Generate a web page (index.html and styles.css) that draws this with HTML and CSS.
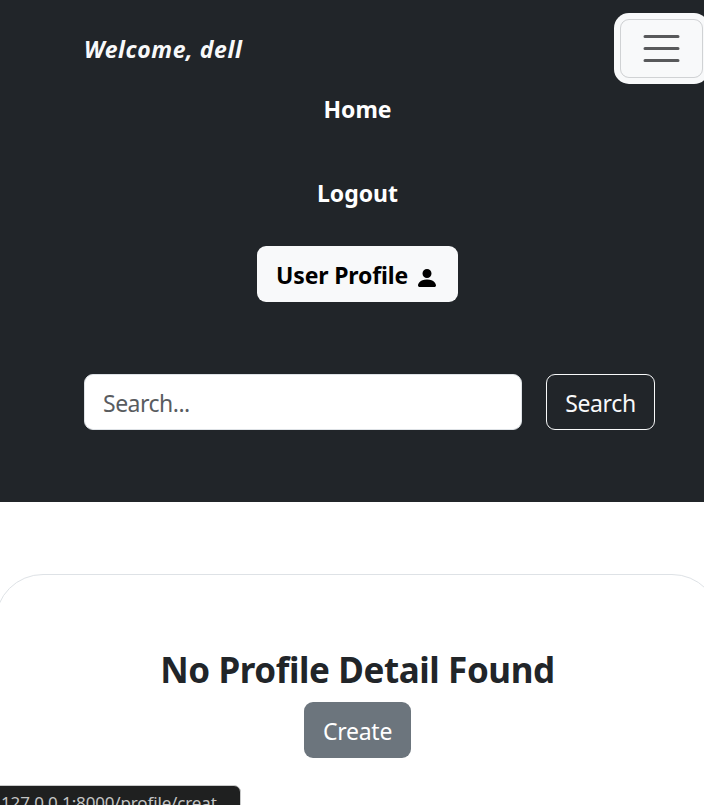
FILE: index.html
```
<!DOCTYPE html>
<html lang="en">
<head>
<meta charset="utf-8">
<title>Profile</title>
<link rel="stylesheet" href="styles.css">
</head>
<body>
<div class="page">
  <header class="navbar">
    <div class="top">
      <span class="brand">Welcome, dell</span>
      <button class="toggler" aria-label="Toggle navigation">
        <svg width="45" height="45" viewBox="0 0 30 30"><path stroke="#58595b" stroke-linecap="round" stroke-miterlimit="10" stroke-width="2" d="M4 7h22M4 15h22M4 23h22"/></svg>
      </button>
    </div>
    <nav class="links">
      <a class="link home">Home</a>
      <a class="link logout">Logout</a>
      <a class="btn profile"><span class="profile-text">User Profile</span><svg class="person" width="24" height="24" viewBox="0 0 16 16"><path d="M3 14s-1 0-1-1 1-4 6-4 6 3 6 4-1 1-1 1zm5-6a3 3 0 1 0 0-6 3 3 0 0 0 0 6"/></svg></a>
    </nav>
    <form class="search">
      <input class="field" type="text" placeholder="Search...">
      <button class="btn outline" type="button"><span class="search-text">Search</span></button>
    </form>
  </header>
  <main class="card">
    <h1 class="title">No Profile Detail Found</h1>
    <a class="btn create"><span class="create-text">Create</span></a>
  </main>
  <div class="status">127.0.0.1:8000/profile/creat...</div>
</div>
</body>
</html>
```
FILE: styles.css
```
* { box-sizing: border-box; }
html, body { margin: 0; height: 805px; overflow: hidden; }
body {
  font: 23px/36px "Noto Sans", "Open Sans", sans-serif;
  color: #212529;
  background: #fff;
}
.page { width: 715px; height: 805px; overflow: hidden; position: relative; }
.navbar { height: 502px; background: #212529; color: #f8f9fa; }
.top {
  display: flex;
  justify-content: space-between;
  align-items: flex-start;
  height: 85px;
  padding: 13px 6px 0 84px;
}
.brand { margin-top: 18px; font-weight: 700; font-style: italic; white-space: nowrap; font-size: 23px; letter-spacing: 0.58px; }
.toggler {
  display: flex;
  align-items: center;
  justify-content: center;
  width: 83px;
  height: 59px;
  margin: 6px 6px 0 0;
  padding: 0;
  border: 1px solid #d0d2d4;
  border-radius: 9px;
  background: #f8f9fa;
  box-shadow: 0 0 0 6px #f8f9fa;
}
.links { display: flex; flex-direction: column; align-items: center; }
.link { height: 36px; font-weight: 700; color: #fff; }
.home { margin-top: 6px; }
.logout { margin-top: 48px; }
.btn {
  display: flex;
  align-items: center;
  justify-content: center;
  height: 56px;
  padding-top: 2px;
  border-radius: 9px;
  font-family: inherit;
  white-space: nowrap;
}
.profile { width: 201px; margin-top: 35px; gap: 7px; background: #f8f9fa; color: #000; font-weight: 700; letter-spacing: -0.15px; }
.person { margin-top: 6px; fill: #000; }
.search { display: flex; gap: 24px; margin: 72px 0 0 84px; }
.field {
  width: 438px;
  height: 56px;
  padding: 2px 18px 0;
  border: 1px solid #dee2e6;
  border-radius: 9px;
  font: 23px "Noto Sans", sans-serif;
  letter-spacing: -0.5px;
  background: #fff;
}
.field::placeholder { color: #595c5f; opacity: 1; }
.outline { width: 109px; padding: 2px 0 0; border: 1px solid #f8f9fa; background: transparent; color: #f8f9fa; font-size: 23px; letter-spacing: -0.4px; }
.card {
  display: flex;
  flex-direction: column;
  align-items: center;
  width: 725px;
  height: 400px;
  margin: 72px 0 0 -5px;
  border: 1px solid #dee2e6;
  border-radius: 48px;
}
.title { margin: 73px 0 0; font-size: 35px; line-height: 44px; font-weight: 700; white-space: nowrap; letter-spacing: -0.4px; }
.create { width: 107px; margin-top: 10px; background: #6c757d; color: #fff; letter-spacing: -0.25px; }
.status {
  position: absolute;
  left: -1px;
  top: 785px;
  width: 242px;
  height: 32px;
  padding-left: 1px;
  border: 1px solid #c9caca;
  border-radius: 0 7px 0 0;
  background: #1f2020;
  color: #c4c5c5;
  font-size: 17px;
  letter-spacing: -0.15px;
  line-height: 34px;
  white-space: nowrap;
}
```
